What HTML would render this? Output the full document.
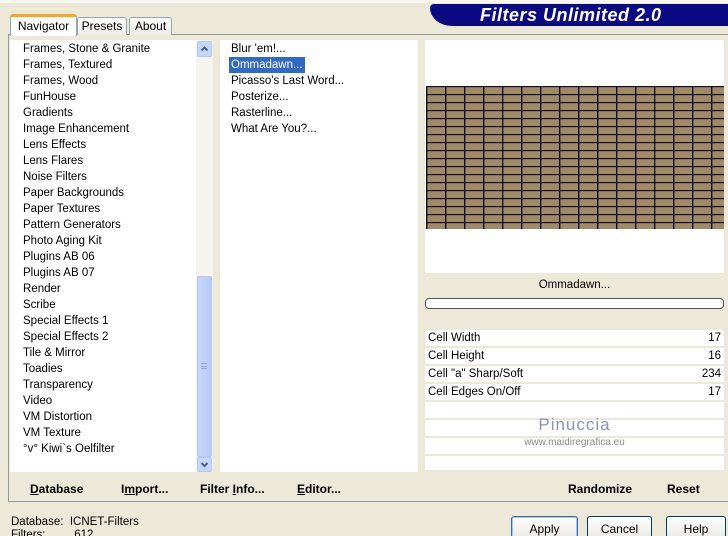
<!DOCTYPE html>
<html><head><meta charset="utf-8">
<style>
*{margin:0;padding:0;box-sizing:border-box}
html,body{width:728px;height:536px;overflow:hidden}
body{background:#ece9d8;font-family:"Liberation Sans",sans-serif;font-size:11.5px;color:#000;position:relative}
.a{position:absolute}
.banner{left:430px;top:4px;width:298px;height:22px;background:#0a0a82;border-bottom-left-radius:22px 18px;border-top-left-radius:4px}
.banner span{position:absolute;left:50px;top:1px;color:#fff;font-weight:bold;font-style:italic;font-size:18px;letter-spacing:0.5px}
.tab{top:17px;height:18px;border:1px solid #91a7b4;border-bottom:none;background:linear-gradient(#fff,#ecebe6);font-size:12px;text-align:center;padding-top:1px;border-radius:3px 3px 0 0}
.frame{left:8px;top:34px;width:720px;height:468px;border:1px solid #919b9c;border-right:none;background:#ece9d8}
.list{background:#fff}
.item{position:absolute;left:0;height:16px;line-height:16px;white-space:nowrap}
.btn{top:516px;height:24px;border:1px solid #003c74;border-radius:3px;background:linear-gradient(#fff,#ecebe6 85%,#d6d0c5);text-align:center;font-size:12px;padding-top:5px}
.row{left:425px;width:299px;height:18px;background:#fff;border-bottom:2px solid #ece9d8;line-height:17px;padding:0 3px;font-size:11.5px}
.row b{float:right;font-weight:normal}
.cmd{top:482px;font-weight:bold;font-size:12px}
.arr{border:1px solid #b4c8f6;border-radius:2px;background:#c5d5fb}
</style></head><body>
<div class="a" style="left:0;top:0;width:728px;height:3px;background:#f8f7f2"></div>
<div class="a banner"><span>Filters Unlimited 2.0</span></div>
<div class="a frame"></div>
<div class="a tab" style="left:10px;top:14px;width:67px;height:22px;background:#fff;border-top:3px solid #f5a623;z-index:2;padding-top:2px">Navigator</div>
<div class="a tab" style="left:77px;width:50px">Presets</div>
<div class="a tab" style="left:129px;width:43px">About</div>

<div class="a list" style="left:10px;top:40px;width:186px;height:432px">
<div class="a" style="left:13px;top:1px">
<div class="item" style="top:0">Frames, Stone &amp; Granite</div>
<div class="item" style="top:16px">Frames, Textured</div>
<div class="item" style="top:32px">Frames, Wood</div>
<div class="item" style="top:48px">FunHouse</div>
<div class="item" style="top:64px">Gradients</div>
<div class="item" style="top:80px">Image Enhancement</div>
<div class="item" style="top:96px">Lens Effects</div>
<div class="item" style="top:112px">Lens Flares</div>
<div class="item" style="top:128px">Noise Filters</div>
<div class="item" style="top:144px">Paper Backgrounds</div>
<div class="item" style="top:160px">Paper Textures</div>
<div class="item" style="top:176px">Pattern Generators</div>
<div class="item" style="top:192px">Photo Aging Kit</div>
<div class="item" style="top:208px">Plugins AB 06</div>
<div class="item" style="top:224px">Plugins AB 07</div>
<div class="item" style="top:240px">Render</div>
<div class="item" style="top:256px">Scribe</div>
<div class="item" style="top:272px">Special Effects 1</div>
<div class="item" style="top:288px">Special Effects 2</div>
<div class="item" style="top:304px">Tile &amp; Mirror</div>
<div class="item" style="top:320px">Toadies</div>
<div class="item" style="top:336px">Transparency</div>
<div class="item" style="top:352px">Video</div>
<div class="item" style="top:368px">VM Distortion</div>
<div class="item" style="top:384px">VM Texture</div>
<div class="item" style="top:400px">°v° Kiwi`s Oelfilter</div>
</div></div>
<div class="a" style="left:196px;top:40px;width:17px;height:432px;background:#f5f4ee"></div>
<div class="a arr" style="left:197px;top:41px;width:15px;height:16px"><svg width="13" height="14" style="display:block"><path d="M3.5 8.5 L6.5 5.5 L9.5 8.5" stroke="#4d6185" stroke-width="2" fill="none"/></svg></div>
<div class="a" style="left:197px;top:276px;width:15px;height:181px;border:1px solid #b4c8f6;border-radius:2px;background:linear-gradient(90deg,#c8d6fb,#b8cbf8)"></div>
<div class="a" style="left:201px;top:363px;width:6px;height:6px;border-top:1px solid #8ea6ea;border-bottom:1px solid #8ea6ea"><div style="margin-top:2px;height:1px;background:#8ea6ea"></div></div>
<div class="a arr" style="left:197px;top:457px;width:15px;height:15px"><svg width="13" height="13" style="display:block"><path d="M3.5 5 L6.5 8 L9.5 5" stroke="#4d6185" stroke-width="2" fill="none"/></svg></div>

<div class="a list" style="left:220px;top:40px;width:198px;height:432px">
<div class="a" style="left:11px;top:1px">
<div class="item" style="top:0">Blur 'em!...</div>
<div class="item" style="top:16px;left:-2px;padding:0 2px;background:#316ac5;color:#fff">Ommadawn...</div>
<div class="item" style="top:32px">Picasso's Last Word...</div>
<div class="item" style="top:48px">Posterize...</div>
<div class="item" style="top:64px">Rasterline...</div>
<div class="item" style="top:80px">What Are You?...</div>
</div></div>

<div class="a" style="left:425px;top:40px;width:299px;height:233px;background:#fff"></div>
<svg class="a" style="left:426px;top:86px" width="298" height="143">
<defs><pattern id="p" width="19" height="8" patternUnits="userSpaceOnUse">
<rect width="19" height="8" fill="#a08a66"/>
<rect x="0" y="0" width="19" height="1.2" fill="#140c24"/>
<rect x="0" y="0" width="1.4" height="8" fill="#140c24"/>
</pattern></defs>
<rect width="298" height="143" fill="url(#p)"/>
</svg>
<div class="a" style="left:425px;top:279px;width:299px;text-align:center;font-size:11.5px">Ommadawn...</div>
<div class="a" style="left:425px;top:298px;width:299px;height:11px;border:1px solid #555;border-radius:4px;background:#fff"></div>
<div class="a row" style="top:330px">Cell Width<b>17</b></div>
<div class="a row" style="top:348px">Cell Height<b>16</b></div>
<div class="a row" style="top:366px">Cell "a" Sharp/Soft<b>234</b></div>
<div class="a row" style="top:384px">Cell Edges On/Off<b>17</b></div>
<div class="a row" style="top:402px"></div>
<div class="a row" style="top:420px"></div>
<div class="a row" style="top:438px"></div>
<div class="a row" style="top:456px;height:16px"></div>
<div class="a" style="left:425px;top:415px;width:299px;text-align:center;color:#8e93b8;font-size:17px;letter-spacing:1px">Pinuccia</div>
<div class="a" style="left:425px;top:437px;width:299px;text-align:center;color:#8a8a8a;font-size:10px">www.maidiregrafica.eu</div>

<div class="a cmd" style="left:30px"><u>D</u>atabase</div>
<div class="a cmd" style="left:121px">I<u>m</u>port...</div>
<div class="a cmd" style="left:200px">Filter <u>I</u>nfo...</div>
<div class="a cmd" style="left:297px"><u>E</u>ditor...</div>
<div class="a cmd" style="left:568px">Randomize</div>
<div class="a cmd" style="left:667px">Reset</div>

<div class="a" style="left:11px;top:516px;line-height:13px">Database:&nbsp;&nbsp;ICNET-Filters<br>Filters:&nbsp;&nbsp;&nbsp;&nbsp;&nbsp;&nbsp;&nbsp;&nbsp;&nbsp;612</div>
<div class="a btn" style="left:511px;width:67px;border-color:#3c66b8;box-shadow:inset 0 0 0 1px #a8c4f0">Apply</div>
<div class="a btn" style="left:587px;width:65px">Cancel</div>
<div class="a btn" style="left:666px;width:60px">Help</div>
</body></html>
